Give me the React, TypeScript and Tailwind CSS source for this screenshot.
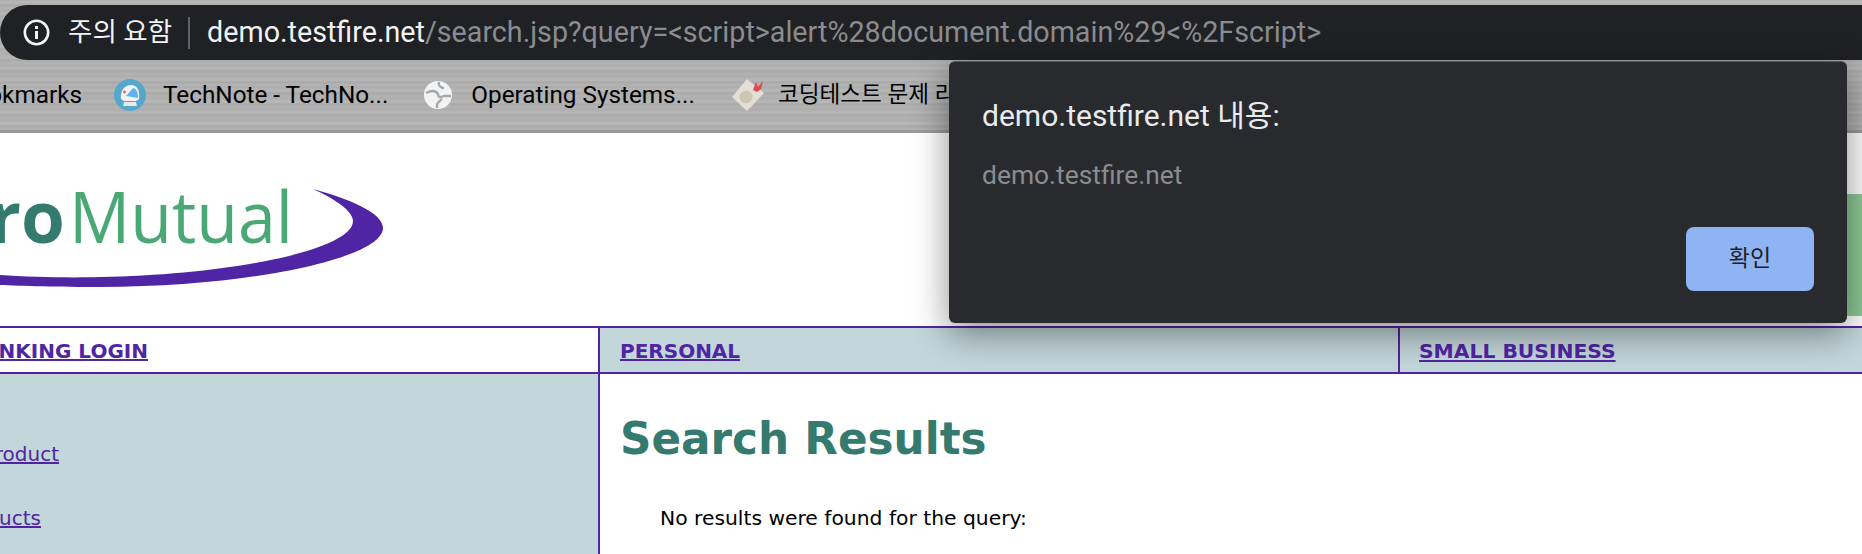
export default function App() {
  const ui = "font-['Roboto','Noto_Sans_CJK_KR',sans-serif]";
  const verdana = "font-['DejaVu_Sans',sans-serif]";
  return (
    <div className="relative w-[1862px] h-[554px] overflow-hidden bg-white">
      {/* browser chrome */}
      <div className={`${ui} h-[133px] bg-[repeating-linear-gradient(180deg,#b0b0b0_0px,#b8b8b8_3px,#a9a9a9_5px,#b3b3b3_8px,#acacac_11px)] pt-[5px] border-b-[3px] border-[#9a9a9a]`}>
        <div className="flex items-center h-[55px] rounded-l-[28px] bg-[#202124] pl-[23px]">
          <svg width="27" height="27" viewBox="0 0 27 27" fill="none" stroke="#f1f3f4" strokeWidth="2.6">
            <circle cx="13.5" cy="13.5" r="11.7" />
            <path d="M13.5 12v8" strokeWidth="3" />
            <path d="M13.5 7v3" strokeWidth="3" />
          </svg>
          <span className="ml-[18px] text-[26.5px] text-[#f1f3f4] leading-none whitespace-nowrap">주의 요함</span>
          <span className="ml-[16px] w-[2px] h-[32px] bg-[#5f6368]" />
          <span className="ml-[17px] text-[28.7px] leading-none whitespace-nowrap text-[#f1f3f4]">
            demo.testfire.net<span className="text-[#8a8c8f]">/search.jsp?query=&lt;script&gt;alert%28document.domain%29&lt;%2Fscript&gt;</span>
          </span>
        </div>
        <div className="flex items-center h-[70px] text-[24.3px] leading-none text-black">
          <div className="flex justify-end w-[82px] overflow-hidden whitespace-nowrap"><span>Bookmarks</span></div>
          <svg className="ml-[32px]" width="32" height="32" viewBox="0 0 32 32">
            <circle cx="16" cy="16" r="16" fill="#55a8cc" />
            <path d="M7 20 C6 11 11 6 17 6 C23 6 26 11 25 20 L22 22 H10 Z" fill="#f2f3f2" />
            <path d="M12 17 L19 9 C23 10 24 14 24 19 Z" fill="#62b4ee" />
            <path d="M10 23 H22 L23 27 H9 Z" fill="#e8e8e6" />
            <circle cx="10.5" cy="13" r="1.4" fill="#d9686a" />
          </svg>
          <span className="ml-[17px] whitespace-nowrap">TechNote - TechNo...</span>
          <svg className="ml-[36px]" width="28" height="28" viewBox="0 0 28 28" fill="none">
            <circle cx="14" cy="14" r="14" fill="#f1f3f5" />
            <path d="M2 12 C8 9 12 10 14 13 C14 16 16 17 20 15 L27 15 M15 1 C14 5 17 7 20 7 M13 27 C12 22 15 21 18 18" stroke="#a6a6a6" strokeWidth="2.4" />
          </svg>
          <span className="ml-[19px] whitespace-nowrap">Operating Systems...</span>
          <svg className="ml-[37px]" width="33" height="33" viewBox="0 0 33 33">
            <path d="M15 0 L32 14 L15 32 L0 18 Z" fill="#e4dfd6" />
            <circle cx="14" cy="18" r="6.5" fill="#cdc5b5" />
            <path d="M21 11 L24 3 L26 8 L31 2 L29 10 L25 13 Z" fill="#e0494c" />
          </svg>
          <span className="ml-[13px] text-[22.6px] whitespace-nowrap">코딩테스트 문제 리스트</span>
        </div>
      </div>

      {/* page */}
      <div className="flex justify-between h-[193px]">
        <svg className="blur-[0.5px]" width="400" height="193" viewBox="0 0 400 193">
          <path d="M313 56 C350 66 383 80 383 95 C383 125 250 154 100 154 C60 154 20 153 0 152 L0 142 C30 144 70 145 100 144 C230 142 353 117 353 88 C353 78 335 66 313 56 Z" fill="#5025a5" />
          <text x="65" y="110" fontSize="71" fontFamily="'Open Sans',sans-serif" fontWeight="700" textAnchor="end" fill="#357a6f">ro</text>
          <text x="69" y="110" fontSize="71" fontFamily="'Open Sans',sans-serif" fill="#4aa874" textLength="224" lengthAdjust="spacingAndGlyphs">Mutual</text>
        </svg>
        <div className="w-[120px] h-[122px] mt-[61px] bg-[#8ec997]" />
      </div>

      <div className={`${verdana} flex h-[48px] pt-[2px] border-y-2 border-[#5025a5] text-[#5025a5] font-bold`}>
        <div className="flex justify-end items-center w-[600px] -mt-[2px] pr-[450px] border-r-2 border-[#5025a5] text-[20px] whitespace-nowrap overflow-hidden">
          <a className="underline mt-[2px]">ONLINE BANKING LOGIN</a>
        </div>
        <div className="flex items-center w-[800px] -mt-[2px] pl-[20px] bg-[#c3d6da] border-r-2 border-[#5025a5] text-[20px]">
          <a className="underline mt-[2px]">PERSONAL</a>
        </div>
        <div className="flex items-center flex-1 -mt-[2px] pl-[19px] bg-[#c3d6da] text-[20.3px]">
          <a className="underline mt-[2px]">SMALL BUSINESS</a>
        </div>
      </div>

      <div className={`${verdana} flex h-[180px]`}>
        <div className="flex flex-col items-end w-[600px] shrink-0 pt-[70px] gap-[44px] bg-[#c3d6da] border-r-2 border-[#5025a5] text-[20px] leading-[20px] text-[#5025a5] overflow-hidden whitespace-nowrap">
          <a className="underline mr-[539px]">Deposit Product</a>
          <a className="underline mr-[557px]">Lending Products</a>
        </div>
        <div className="pl-[20px] pt-[39px]">
          <h1 className="text-[43.7px] leading-[52px] font-bold text-[#357a6f] whitespace-nowrap">Search Results</h1>
          <p className="ml-[40px] mt-[41px] text-[20.3px] leading-[24px] text-black whitespace-nowrap">No results were found for the query:</p>
        </div>
      </div>

      {/* alert dialog */}
      <div className={`${ui} absolute left-[949px] top-[61px] w-[898px] h-[262px] rounded-[6px] bg-[#292a2d] border-t border-[#55565a] shadow-[0_10px_36px_rgba(0,0,0,0.45)] pl-[33px] pr-[33px] pt-[36px]`}>
        <div className="text-[30px] leading-[36px] text-[#e8eaed] whitespace-nowrap">demo.testfire.net 내용:</div>
        <div className="mt-[26px] text-[26.4px] leading-[30px] text-[#8b8c8f] whitespace-nowrap">demo.testfire.net</div>
        <div className="flex justify-end mt-[37px]">
          <button className="w-[128px] h-[64px] rounded-[8px] bg-[#8fb4f3] text-[23px] text-[#202124]">확인</button>
        </div>
      </div>
    </div>
  );
}
